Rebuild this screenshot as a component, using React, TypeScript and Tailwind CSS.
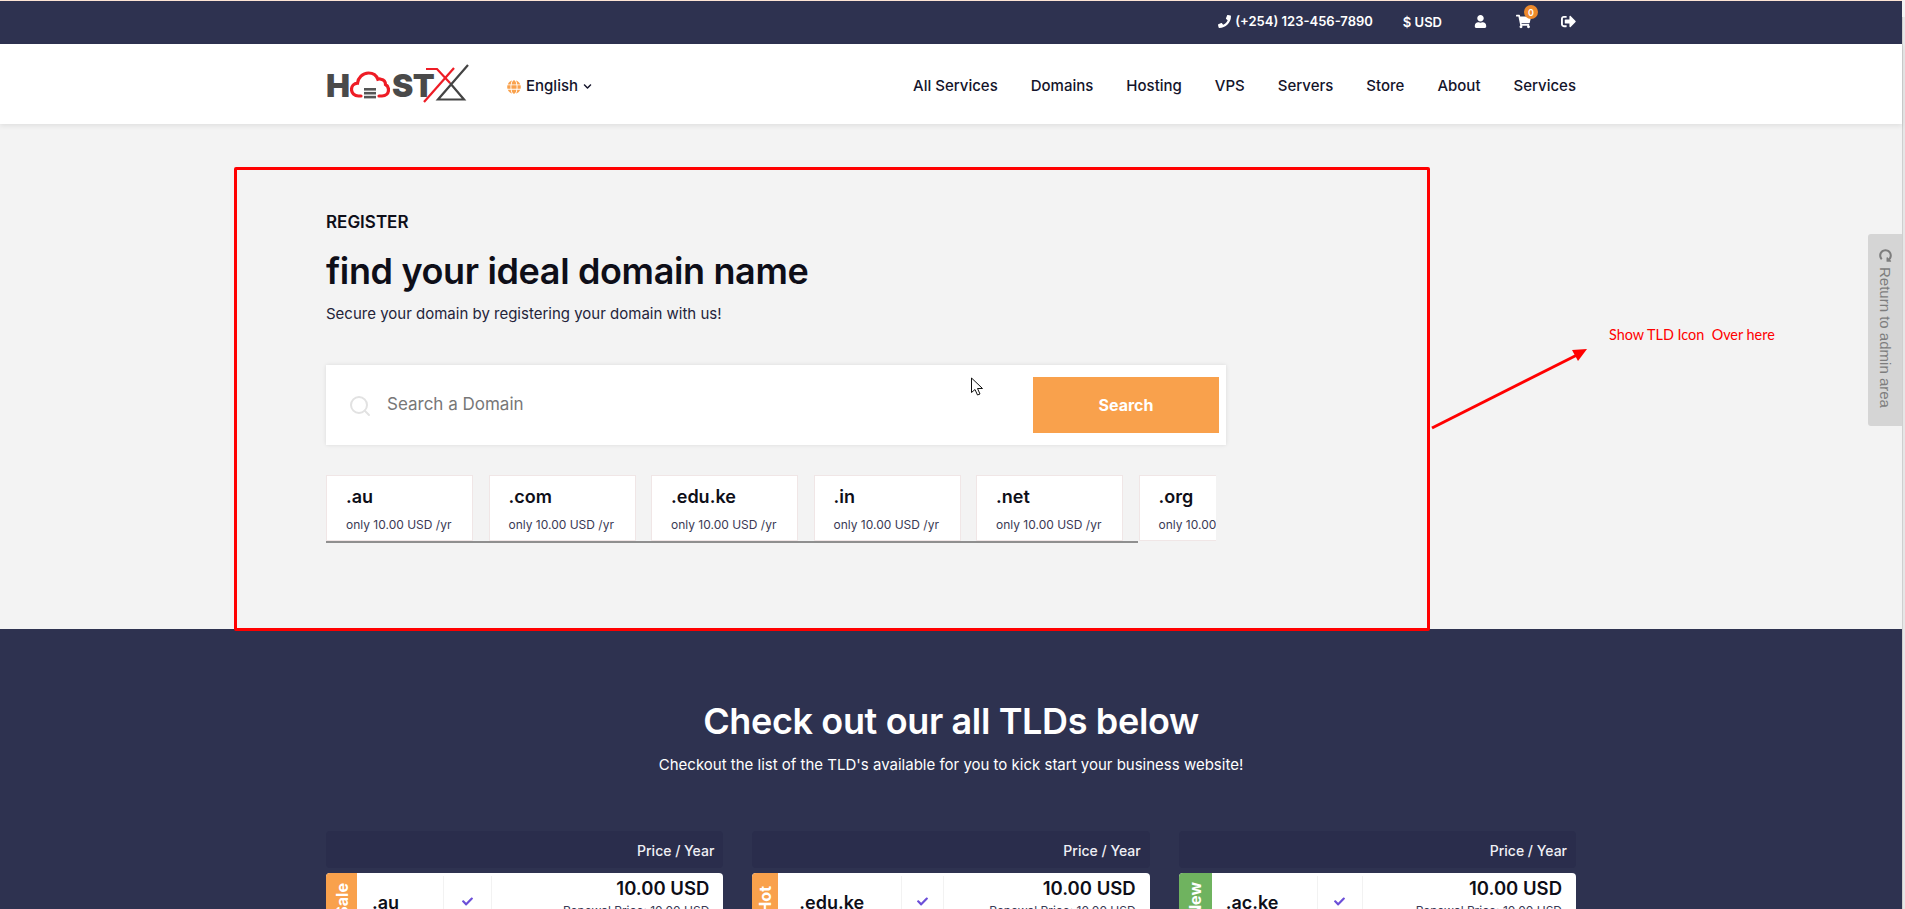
import { Search } from 'lucide-react';
import { FaCheck, FaChevronDown, FaGlobe, FaPhone, FaRedoAlt, FaShoppingCart, FaSignOutAlt, FaUser } from 'react-icons/fa';

const navLinks = ['All Services', 'Domains', 'Hosting', 'VPS', 'Servers', 'Store', 'About', 'Services'];
const spotlight = ['.au', '.com', '.edu.ke', '.in', '.net', '.org'];

const tldCards = [
  { tag: 'Sale', tagClass: 'w-[31px] bg-[#f9a14c]', name: '.au', nameClass: 'w-[86px] pl-[15px]', checkClass: 'w-[49px]' },
  { tag: 'Hot', tagClass: 'w-[26px] bg-[#f9a14c]', name: '.edu.ke', nameClass: 'w-[123px] pl-[21px]', checkClass: 'w-[43px]' },
  { tag: 'New', tagClass: 'w-[33px] bg-[#6fb35f]', name: '.ac.ke', nameClass: 'w-[105px] pl-[14px]', checkClass: 'w-[46px]' },
];

function Logo() {
  return (
    <div className="flex h-[40px] w-[146px] items-center text-[32px] leading-none font-black text-[#4a4a4a]">
      <span className="w-[24px] pt-[3px]">H</span>
      <svg width="40" height="30" viewBox="0 0 40 30" fill="none" className="mt-[2px] shrink-0">
        <path
          d="M11 26H8.5C4.5 26 1.5 23 1.5 19.5C1.5 16 4 13.5 7.5 13.2C8 8 12.5 3 18.5 3C23 3 26.5 5.5 27.8 9.2C28.8 8.8 30 8.8 31 9.2C34 9.8 35.5 12 35.5 14.5C37.5 15.5 38.5 17.5 38.5 19.8C38.5 23.5 35.5 26 32 26H29"
          stroke="#ee1c25"
          strokeWidth="3.2"
          strokeLinecap="round"
        />
        <rect x="14" y="18" width="12" height="2.6" fill="#555" />
        <rect x="14" y="21.9" width="12" height="2.6" fill="#555" />
        <rect x="14" y="25.8" width="12" height="2.6" fill="#555" />
      </svg>
      <span className="ml-[2px] w-[32px] pt-[3px] tracking-[-0.5px]">ST</span>
      <svg width="47" height="40" viewBox="0 0 47 40" fill="none" className="-ml-[1px] shrink-0">
        <path d="M3 5H14L27 19" stroke="#ee1c25" strokeWidth="2.2" />
        <path d="M31 4L1 38" stroke="#ee1c25" strokeWidth="2.2" />
        <path d="M45 1L15 35.5H41L27 19" stroke="#444" strokeWidth="2.2" />
      </svg>
    </div>
  );
}

function TopBar() {
  return (
    <div className="h-[44px] border-t border-[#fde4d4] bg-[#2e3250] text-white">
      <div className="mx-auto flex h-full w-[1250px] items-center justify-end pb-[2px] text-[13px] font-semibold">
        <FaPhone className="mr-[4px] text-[13px]" />
        <span>(+254) 123-456-7890</span>
        <span className="ml-[30px] pt-[3px]">$ USD</span>
        <FaUser className="ml-[32px] text-[13px]" />
        <span className="relative ml-[29px]">
          <FaShoppingCart className="text-[15px]" />
          <span className="absolute -top-[9px] left-[8px] flex h-[14px] w-[14px] items-center justify-center rounded-full bg-[#ee8a2c] text-[9px] leading-none">0</span>
        </span>
        <FaSignOutAlt className="ml-[30px] text-[15px]" />
      </div>
    </div>
  );
}

function Header() {
  return (
    <div className="relative z-10 h-[80px] bg-white shadow-[0_2px_5px_rgba(0,0,0,0.08)]">
      <div className="mx-auto flex h-full w-[1250px] items-center">
        <Logo />
        <div className="ml-[35px] flex items-center pt-[5px] text-[15px] font-medium text-[#14142b]">
          <FaGlobe className="mr-[5px] text-[14px] text-[#f9a14c]" />
          English
          <FaChevronDown className="ml-[5px] text-[9px]" />
        </div>
        <div className="ml-auto flex items-center gap-[33px] pt-[5px] text-[15px] font-medium text-[#14142b]">
          {navLinks.map((link, idx) => (
            <span key={idx}>{link}</span>
          ))}
        </div>
      </div>
    </div>
  );
}

function RegisterSection() {
  return (
    <div className="h-[505px] bg-[#f3f3f3]">
      <div className="mx-auto w-[1250px] pt-[86px] text-[#0e0e18]">
        <div className="text-[17px] leading-[24px] font-semibold">REGISTER</div>
        <h1 className="mt-[15px] text-[36px] leading-[44px] font-semibold tracking-[-0.36px]">find your ideal domain name</h1>
        <p className="mt-[9px] text-[15px] leading-[24px] text-[#24243a]">Secure your domain by registering your domain with us!</p>

        <div className="mt-[39px] flex h-[80px] w-[900px] items-center bg-white pr-[7px] pl-[22px] shadow-[0_0_4px_rgba(0,0,0,0.1)]">
          <Search className="mt-[2px] h-[24px] w-[24px] text-[#e2e2e2]" strokeWidth={2} />
          <span className="ml-[15px] text-[17px] text-[#777]">Search a Domain</span>
          <div className="ml-auto flex h-[56px] w-[186px] items-center justify-center bg-[#f9a14c] text-[16px] font-bold text-white">Search</div>
        </div>

        <div className="mt-[30px] w-[890px] overflow-hidden">
          <div className="flex gap-[15.5px]">
            {spotlight.map((tld) => (
              <div key={tld} className="h-[66px] w-[147px] shrink-0 border border-[#f0e6e6] bg-white pt-[8px] pl-[19px]">
                <div className="text-[18px] leading-[26px] font-semibold text-[#0e0e18]">{tld}</div>
                <div className="mt-[7px] text-[12px] leading-[16px] whitespace-nowrap text-[#3a3a55]">only 10.00 USD /yr</div>
              </div>
            ))}
          </div>
          <div className="h-[2px] w-[812px] bg-[#8f8f8f]" />
        </div>
      </div>
    </div>
  );
}

function TldSection() {
  return (
    <div className="bg-[#2e3250] pt-[70px] pb-[40px] text-white">
      <h2 className="text-center text-[36px] leading-[44px] font-semibold tracking-[-0.36px]">Check out our all TLDs below</h2>
      <p className="mt-[10px] text-center text-[15px] leading-[24px]">Checkout the list of the TLD's available for you to kick start your business website!</p>

      <div className="mx-auto mt-[54px] grid w-[1250px] grid-cols-3 gap-[29px]">
        {tldCards.map((card) => (
          <div key={card.name}>
            <div className="flex h-[37px] items-center justify-end rounded-[4px] bg-[#2a2d4c] pt-[2px] pr-[9px] text-[14px] font-medium text-[#f0f0f5]">Price / Year</div>
            <div className="mt-[5px] flex h-[62px] overflow-hidden rounded-[4px] bg-white text-[#0e0e18]">
              <div className={`${card.tagClass} flex shrink-0 items-center justify-center pb-[8px]`}>
                <span className="rotate-180 text-[16px] font-bold text-white [writing-mode:vertical-rl]">{card.tag}</span>
              </div>
              <div className={`${card.nameClass} flex shrink-0 items-center pb-[4px] text-[18px] font-semibold`}>{card.name}</div>
              <div className={`${card.checkClass} my-[3px] flex shrink-0 items-center justify-center border-x border-[#f2f2f2] pb-[6px] text-[#6c4fd8]`}>
                <FaCheck className="text-[11px]" />
              </div>
              <div className="flex-1 pt-[3px] pr-[14px] text-right">
                <div className="text-[18.5px] leading-[24px] font-semibold">10.00 USD</div>
                <div className="mt-[2px] text-[12px] leading-[18px] text-[#3a3a55]">Renewal Price: 10.00 USD</div>
              </div>
            </div>
          </div>
        ))}
      </div>
    </div>
  );
}

export default function App() {
  return (
    <div className="relative flex h-[909px] overflow-hidden bg-[#f3f3f3] font-['Inter',sans-serif]">
      <div className="w-[1902px] shrink-0">
        <TopBar />
        <Header />
        <RegisterSection />
        <TldSection />
      </div>
      <div className="mt-[17px] flex-1 border-l border-[#cfcfcf] bg-[#e6e6e6]" />

      {/* review markup pasted over the screenshot */}
      <div className="absolute top-[167px] left-[234px] h-[464px] w-[1196px] rounded-[2px] border-[3px] border-[#f00]" />
      <svg className="absolute top-[340px] left-[1425px]" width="170" height="95" viewBox="0 0 170 95" fill="none">
        <path d="M7 88L154 14" stroke="#f00" strokeWidth="3" />
        <path d="M162 9L147 10L153 21Z" fill="#f00" />
      </svg>
      <div className="absolute top-[326px] left-[1609px] font-['Lato',sans-serif] text-[14.4px] leading-[18px] whitespace-pre text-[#f00]">Show TLD Icon  Over here</div>

      <div className="absolute top-[234px] left-[1868px] flex h-[192px] w-[34px] items-center gap-[5px] rounded-l-[3px] bg-[#d5d5d5] pt-[15px] font-['Liberation_Sans',sans-serif] text-[15px] leading-[34px] text-[#7d7d7d] [writing-mode:vertical-rl]">
        <FaRedoAlt className="rotate-90 text-[13px]" />
        Return to admin area
      </div>

      {/* mouse pointer caught in the capture */}
      <svg className="absolute top-[377px] left-[970px]" width="14" height="20" viewBox="0 0 14 20" fill="white" stroke="#111" strokeWidth="1">
        <path d="M1.5 1V15.5L5 12.5L7.5 18L10 17L7.5 11.5H12.5Z" />
      </svg>
    </div>
  );
}
